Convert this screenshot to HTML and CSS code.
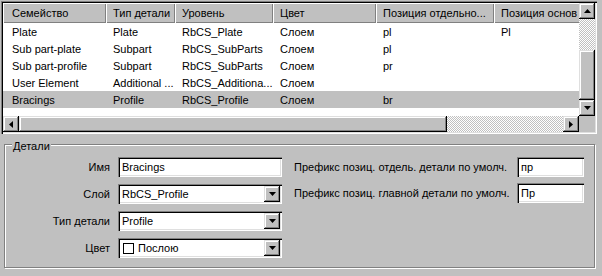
FILE: index.html
```html
<!DOCTYPE html>
<html lang="ru">
<head>
  <meta charset="UTF-8" />
  <title>Семейства деталей</title>
  <link rel="stylesheet" href="styles.css">
</head>
<body>
  <div class="list">
    <div class="list-body">
      <div class="header">
        <span>Семейство</span>
        <span>Тип детали</span>
        <span>Уровень</span>
        <span>Цвет</span>
        <span>Позиция отдельно...</span>
        <span>Позиция основ</span>
      </div>
      <div class="row">
        <span>Plate</span><span>Plate</span><span>RbCS_Plate</span><span>Слоем</span><span>pl</span><span>Pl</span>
      </div>
      <div class="row">
        <span>Sub part-plate</span><span>Subpart</span><span>RbCS_SubParts</span><span>Слоем</span><span>pl</span><span></span>
      </div>
      <div class="row">
        <span>Sub part-profile</span><span>Subpart</span><span>RbCS_SubParts</span><span>Слоем</span><span>pr</span><span></span>
      </div>
      <div class="row">
        <span>User Element</span><span>Additional ...</span><span>RbCS_Additiona...</span><span>Слоем</span><span></span><span></span>
      </div>
      <div class="row selected">
        <span>Bracings</span><span>Profile</span><span>RbCS_Profile</span><span>Слоем</span><span>br</span><span></span>
      </div>
    </div>

    <div class="vscroll">
      <div class="btn"><svg width="7" height="4" viewBox="0 0 7 4"><path d="M3.5 0L7 4H0z"/></svg></div>
      <div class="track-top"></div>
      <div class="thumb thumb-v"></div>
      <div class="track-fill"></div>
      <div class="btn"><svg width="7" height="4" viewBox="0 0 7 4"><path d="M0 0H7L3.5 4z"/></svg></div>
    </div>

    <div class="hscroll">
      <div class="btn"><svg width="4" height="7" viewBox="0 0 4 7"><path d="M0 3.5L4 0V7z"/></svg></div>
      <div class="thumb thumb-h"></div>
      <div class="track-fill"></div>
      <div class="btn"><svg width="4" height="7" viewBox="0 0 4 7"><path d="M0 0L4 3.5L0 7z"/></svg></div>
    </div>
    <div class="corner"></div>
  </div>

  <div class="group">
    <span class="group-title">Детали</span>
    <div class="group-body">
      <div class="fields-left">
        <label>Имя</label>
        <div class="field">Bracings</div>

        <label>Слой</label>
        <div class="field combo">
          <span class="value">RbCS_Profile</span>
          <span class="drop"><svg width="7" height="4" viewBox="0 0 7 4"><path d="M0 0H7L3.5 4z"/></svg></span>
        </div>

        <label>Тип детали</label>
        <div class="field combo">
          <span class="value">Profile</span>
          <span class="drop"><svg width="7" height="4" viewBox="0 0 7 4"><path d="M0 0H7L3.5 4z"/></svg></span>
        </div>

        <label>Цвет</label>
        <div class="field combo">
          <span class="value"><span class="swatch"></span>Послою</span>
          <span class="drop"><svg width="7" height="4" viewBox="0 0 7 4"><path d="M0 0H7L3.5 4z"/></svg></span>
        </div>
      </div>

      <div class="fields-right">
        <label>Префикс позиц. отдель. детали по умолч.</label>
        <div class="field">пр</div>

        <label>Префикс позиц. главной детали по умолч.</label>
        <div class="field">Пр</div>
      </div>
    </div>
  </div>
</body>
</html>
```

FILE: styles.css
```css
body {
  margin: 0;
  width: 602px;
  height: 276px;
  overflow: hidden;
  background-color: #c0c0c0;
  font-family: "Liberation Sans", Arial, sans-serif;
  font-size: 11px;
  color: #000;
}

/* list view */
.list {
  margin: 1px 0 0 1px;
  width: 596px;
  height: 133px;
  box-sizing: border-box;
  padding: 2px;
  display: grid;
  grid-template-columns: 576px 16px;
  grid-template-rows: 113px 16px;
  box-shadow: inset 1px 1px #808080, inset 2px 2px #000, inset -1px -1px #fff, inset -2px -2px #dfdfdf;
}
.list-body {
  background-color: #fff;
  overflow: hidden;
}
.header,
.row {
  display: grid;
  grid-template-columns: 103px 69px 98px 103px 118px 140px;
}
.header {
  height: 20px;
  background-color: #c0c0c0;
}
.header span {
  padding-top: 1px;
  line-height: 19px;
  padding-left: 7px;
  white-space: nowrap;
  overflow: hidden;
  box-shadow: inset 1px 1px #fff, inset -1px -1px #808080;
}
.row {
  height: 17px;
  line-height: 18px;
}
.row span {
  padding-left: 7px;
  white-space: nowrap;
  overflow: hidden;
}
.header span:first-child,
.row span:first-child {
  padding-left: 9px;
}
.row.selected {
  background-color: #c0c0c0;
}

/* scroll bars */
.btn,
.thumb,
.drop {
  background-color: #c0c0c0;
  box-shadow: inset -1px -1px #000, inset 1px 1px #dfdfdf, inset -2px -2px #808080, inset 2px 2px #fff;
}
.btn {
  width: 16px;
  height: 16px;
  flex: none;
  display: flex;
  align-items: center;
  justify-content: center;
}
.btn svg,
.drop svg {
  display: block;
}
.vscroll,
.hscroll {
  display: flex;
  background: repeating-conic-gradient(#c0c0c0 0% 25%, #fff 0% 50%) 0 0 / 2px 2px;
}
.vscroll {
  flex-direction: column;
}
.track-top {
  height: 31px;
  flex: none;
}
.thumb-v {
  height: 50px;
  flex: none;
}
.thumb-h {
  width: 428px;
  flex: none;
}
.track-fill {
  flex: 1;
}
.corner {
  background-color: #c0c0c0;
}

/* group box */
.group {
  position: relative;
  margin: 10px 0 0 4px;
  width: 589px;
  height: 122px;
  border: 1px solid #808080;
  box-shadow: inset 1px 1px #fff, 1px 1px #fff;
}
.group-title {
  position: absolute;
  top: -5px;
  left: 7px;
  padding: 0 1px;
  line-height: 13px;
  background-color: #c0c0c0;
}
.group-body {
  display: flex;
  padding-top: 12px;
}
.fields-left {
  display: grid;
  grid-template-columns: 105px 164px;
  grid-auto-rows: 20px;
  column-gap: 8px;
  row-gap: 7px;
}
.fields-right {
  margin-left: 12px;
  display: grid;
  grid-template-columns: 214px 67px;
  grid-auto-rows: 20px;
  column-gap: 9px;
  row-gap: 6px;
  align-content: start;
}
label {
  display: flex;
  align-items: center;
  white-space: nowrap;
}
.fields-left label {
  justify-content: flex-end;
}
.field {
  display: flex;
  align-items: center;
  padding-left: 4px;
  background-color: #fff;
  box-shadow: inset 1px 1px #808080, inset 2px 2px #000, inset -1px -1px #fff, inset -2px -2px #dfdfdf;
  white-space: nowrap;
}
.combo {
  padding-right: 2px;
}
.value {
  display: flex;
  align-items: center;
  flex: 1;
}
.drop {
  width: 16px;
  height: 16px;
  display: flex;
  align-items: center;
  justify-content: center;
}
.swatch {
  width: 9px;
  height: 9px;
  border: 1px solid #000;
  background-color: #fff;
  margin: 0 4px 0 1px;
}
```
